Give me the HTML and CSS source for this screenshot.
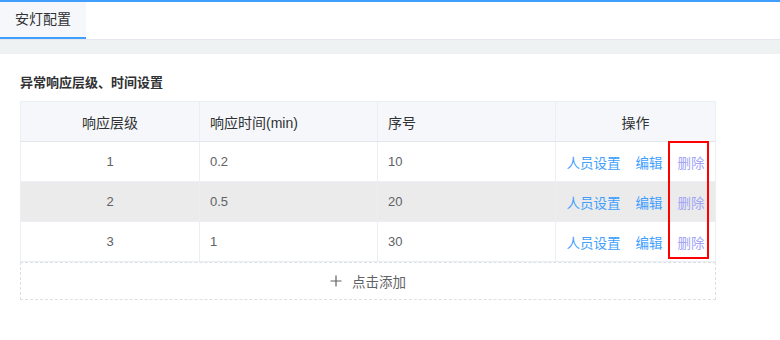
FILE: index.html
```html
<!DOCTYPE html>
<html>
<head>
    <title>安灯配置</title>
    <link rel="stylesheet" href="styles.css">
</head>
<body>
    <div class="tabs">
        <div class="tab active">安灯配置</div>
    </div>
    <div class="band"></div>
    <div class="content">
        <h3 class="title">异常响应层级、时间设置</h3>
        <div class="table-wrap">
            <table class="grid">
                <colgroup>
                    <col class="c1">
                    <col class="c2">
                    <col class="c3">
                    <col class="c4">
                </colgroup>
                <thead>
                    <tr>
                        <th>响应层级</th>
                        <th class="left">响应时间(min)</th>
                        <th class="left">序号</th>
                        <th>操作</th>
                    </tr>
                </thead>
                <tbody>
                    <tr>
                        <td>1</td>
                        <td class="left">0.2</td>
                        <td class="left">10</td>
                        <td class="op-cell"><div class="ops"><a>人员设置</a><a>编辑</a><a class="del">删除</a></div></td>
                    </tr>
                    <tr class="hover">
                        <td>2</td>
                        <td class="left">0.5</td>
                        <td class="left">20</td>
                        <td class="op-cell"><div class="ops"><a>人员设置</a><a>编辑</a><a class="del">删除</a></div></td>
                    </tr>
                    <tr>
                        <td>3</td>
                        <td class="left">1</td>
                        <td class="left">30</td>
                        <td class="op-cell"><div class="ops"><a>人员设置</a><a>编辑</a><a class="del">删除</a></div></td>
                    </tr>
                </tbody>
            </table>
            <div class="add-row">
                <svg class="plus" width="12" height="12" viewBox="0 0 12 12">
                    <path d="M6 0.5V11.5M0.5 6H11.5" stroke="#606266" stroke-width="1.2" fill="none"/>
                </svg>
                点击添加
            </div>
            <div class="mark"></div>
        </div>
    </div>
</body>
</html>
```

FILE: styles.css
```css
body {
    margin: 0;
    font-family: "Liberation Sans", "Noto Sans CJK SC", sans-serif;
    font-size: 13px;
    color: #606266;
    background-color: #fff;
}
.tabs {
    border-top: 2px solid #409eff;
    height: 37px;
    display: flex;
    border-bottom: 1px solid #e4e7ed;
}
.tab {
    width: 86px;
    box-sizing: border-box;
    height: 37px;
    line-height: 35px;
    text-align: center;
    font-size: 14px;
    color: #303133;
    background-color: #f5f7fa;
    border-bottom: 2px solid #409eff;
}
.band {
    height: 14px;
    background-color: #eff2f2;
}
.content {
    padding: 20px 20px 0 20px;
}
.title {
    margin: 0 0 9px 0;
    font-size: 13px;
    font-weight: bold;
    color: #303133;
    line-height: 18px;
}
.table-wrap {
    position: relative;
    width: 696px;
}
.grid {
    width: 100%;
    border-collapse: collapse;
    table-layout: fixed;
}
.c1 { width: 179px; }
.c2 { width: 178px; }
.c3 { width: 178px; }
.c4 { width: 160px; }
.grid th, .grid td {
    border: 1px solid #ebeef5;
    height: 39px;
    padding: 0 10px;
    text-align: center;
    font-weight: normal;
    white-space: nowrap;
}
.grid th {
    background-color: #f5f7fa;
    color: #303133;
    font-size: 14px;
    border-bottom-color: #dfe6ec;
}
.grid .left {
    text-align: left;
}
.grid td.op-cell {
    padding: 0;
}
.grid tr.hover td {
    background-color: #ebebeb;
}
.ops {
    display: flex;
    justify-content: center;
    gap: 15px;
    font-size: 13.5px;
}
.ops a {
    color: #409eff;
    cursor: pointer;
}
.ops a.del {
    color: #a0a5f5;
}
.add-row {
    height: 36px;
    border: 1px dashed #dcdfe6;
    display: flex;
    align-items: center;
    justify-content: center;
    color: #606266;
    font-size: 13.5px;
}
.plus {
    margin-right: 10px;
}
.mark {
    position: absolute;
    left: 648px;
    top: 40px;
    width: 37px;
    height: 114px;
    border: 2px solid #f00;
}
```
